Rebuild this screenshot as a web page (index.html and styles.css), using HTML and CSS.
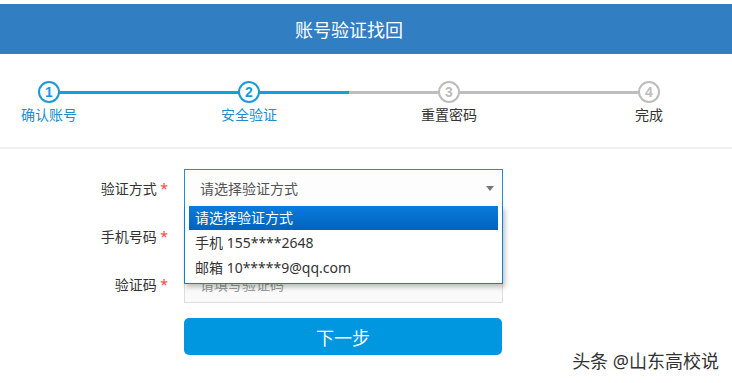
FILE: index.html
```html
<!DOCTYPE html>
<html lang="zh-CN">
<head>
    <meta charset="UTF-8">
    <meta name="viewport" content="width=device-width, initial-scale=1.0">
    <title>账号验证找回</title>
    <link rel="stylesheet" href="styles.css">
</head>
<body>
    <div class="page">
        <header class="title-bar">账号验证找回</header>

        <div class="steps">
            <div class="track"><div class="track-fill"></div></div>
            <div class="step done">
                <span class="dot">1</span>
                <span class="step-name">确认账号</span>
            </div>
            <div class="step done">
                <span class="dot">2</span>
                <span class="step-name">安全验证</span>
            </div>
            <div class="step">
                <span class="dot">3</span>
                <span class="step-name">重置密码</span>
            </div>
            <div class="step">
                <span class="dot">4</span>
                <span class="step-name">完成</span>
            </div>
        </div>

        <form class="form">
            <div class="row">
                <label class="row-label">验证方式 <em>*</em></label>
                <div class="field select-wrap">
                    <div class="select">请选择验证方式<span class="arrow"></span></div>
                    <ul class="dropdown">
                        <li class="active">请选择验证方式</li>
                        <li>手机 155****2648</li>
                        <li>邮箱 10*****9@qq.com</li>
                    </ul>
                </div>
            </div>
            <div class="row">
                <label class="row-label">手机号码 <em>*</em></label>
                <div class="field"><input class="input" type="text" placeholder="请填写手机号码"></div>
            </div>
            <div class="row">
                <label class="row-label">验证码 <em>*</em></label>
                <div class="field"><input class="input" type="text" placeholder="请填写验证码"></div>
            </div>
            <div class="actions">
                <button class="btn" type="button">下一步</button>
            </div>
        </form>

        <div class="watermark">头条 @山东高校说</div>
    </div>
</body>
</html>
```

FILE: styles.css
```css
*{
    margin: 0;
    padding: 0;
    box-sizing: border-box;
}
body{
    font-family: "Noto Sans", "Noto Sans CJK SC", sans-serif;
    background-color: #fff;
    color: #333;
}
.page{
    position: relative;
    height: 383px;
    padding-top: 4px;
    overflow: hidden;
}
.title-bar{
    height: 50px;
    background-color: #317ec3;
    color: #fff;
    font-size: 18px;
    display: flex;
    align-items: center;
    justify-content: center;
    padding-right: 34px;
}

/* steps */
.steps{
    position: relative;
    display: flex;
    gap: 102px;
    margin-top: 27px;
    padding-bottom: 22px;
    border-bottom: 2px solid #eee;
}
.track{
    position: absolute;
    left: 49px;
    top: 10px;
    width: 600px;
    height: 3px;
    background-color: #bdbdbd;
}
.track-fill{
    width: 300px;
    height: 100%;
    background-color: #139fdc;
}
.step{
    position: relative;
    z-index: 1;
    width: 98px;
    display: flex;
    flex-direction: column;
    align-items: center;
}
.dot{
    width: 22px;
    height: 22px;
    border-radius: 50%;
    border: 2px solid #bdbdbd;
    background-color: #fff;
    color: #bdbdbd;
    font: bold 14px "Liberation Sans", sans-serif;
    display: flex;
    align-items: center;
    justify-content: center;
}
.step.done .dot{
    border-color: #1a9bd7;
    color: #1a9bd7;
}
.step-name{
    margin-top: 2px;
    font-size: 14px;
    line-height: 20px;
    white-space: nowrap;
    color: #333;
}
.step.done .step-name{
    color: #1d8dd0;
}

/* form */
.form{
    padding-top: 20px;
}
.row{
    display: flex;
    align-items: center;
    height: 38px;
    margin-bottom: 10px;
}
.row-label{
    width: 168px;
    text-align: right;
    font-size: 14px;
    color: #333;
}
.row-label em{
    font-style: normal;
    color: #f04848;
}
.field{
    margin-left: 16px;
}
.select-wrap{
    position: relative;
}
.select{
    position: relative;
    width: 319px;
    height: 38px;
    border: 1px solid #1e8fd8;
    background-color: #fdfdfd;
    padding-left: 15px;
    font-size: 14px;
    color: #555;
    display: flex;
    align-items: center;
}
.arrow{
    position: absolute;
    right: 8px;
    top: 16px;
    border-left: 4px solid transparent;
    border-right: 4px solid transparent;
    border-top: 5px solid #777;
}
.dropdown{
    position: absolute;
    z-index: 5;
    left: 0;
    top: 37px;
    width: 319px;
    list-style: none;
    background-color: #fff;
    border: 1px solid #0e7fd5;
    border-top: none;
    padding: 0 4px 3px;
    box-shadow: 2px 3px 5px rgba(0, 0, 0, 0.25);
}
.dropdown li{
    height: 25px;
    line-height: 25px;
    padding-left: 6px;
    font-size: 14px;
    color: #333;
}
.dropdown li.active{
    height: 24px;
    line-height: 24px;
    background: linear-gradient(#0a7bdc, #0063bc);
    color: #fff;
}
.input{
    width: 319px;
    height: 38px;
    border: 1px solid #ddd;
    background-color: #fafafa;
    padding-left: 15px;
    font-family: inherit;
    font-size: 14px;
    color: #333;
    outline: none;
}
.input::placeholder{
    color: #999;
}
.actions{
    padding-left: 184px;
    padding-top: 5px;
}
.btn{
    width: 318px;
    height: 37px;
    border: none;
    border-radius: 5px;
    background-color: #0097e0;
    color: #fff;
    font-family: inherit;
    font-size: 18px;
}

.watermark{
    position: absolute;
    right: 13px;
    top: 349px;
    font-size: 18px;
    line-height: 24px;
    color: #333;
    text-shadow: 0 0 2px #fff;
}
```
